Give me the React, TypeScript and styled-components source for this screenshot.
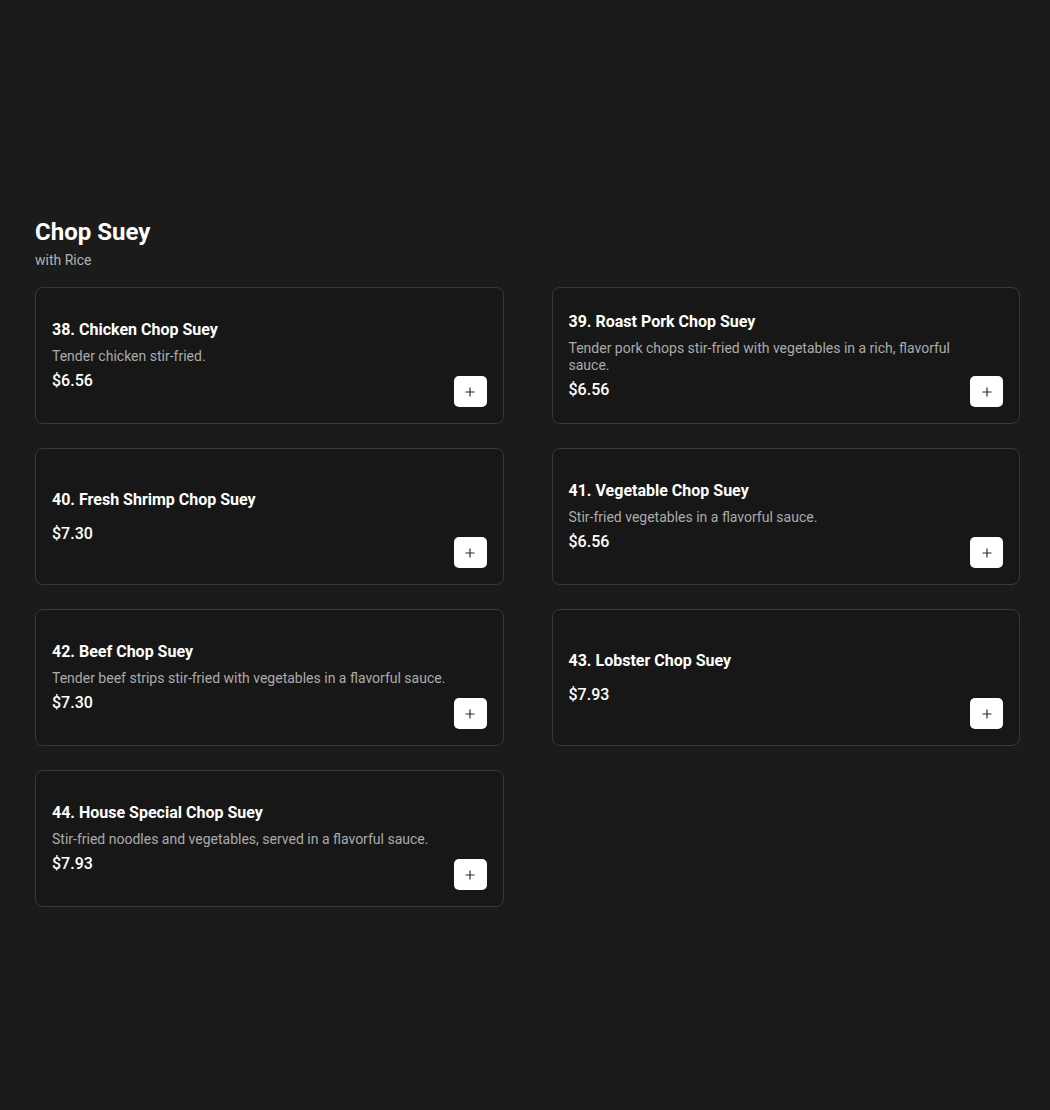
import styled, { createGlobalStyle } from "styled-components";
import { Plus } from "lucide-react";

interface MenuItem {
  id: number;
  name: string;
  description?: string;
  price: number;
}

const items: MenuItem[] = [
  { id: 38, name: "Chicken Chop Suey", description: "Tender chicken stir-fried.", price: 6.56 },
  {
    id: 39,
    name: "Roast Pork Chop Suey",
    description: "Tender pork chops stir-fried with vegetables in a rich, flavorful sauce.",
    price: 6.56,
  },
  { id: 40, name: "Fresh Shrimp Chop Suey", price: 7.3 },
  { id: 41, name: "Vegetable Chop Suey", description: "Stir-fried vegetables in a flavorful sauce.", price: 6.56 },
  {
    id: 42,
    name: "Beef Chop Suey",
    description: "Tender beef strips stir-fried with vegetables in a flavorful sauce.",
    price: 7.3,
  },
  { id: 43, name: "Lobster Chop Suey", price: 7.93 },
  {
    id: 44,
    name: "House Special Chop Suey",
    description: "Stir-fried noodles and vegetables, served in a flavorful sauce.",
    price: 7.93,
  },
];

const GlobalStyle = createGlobalStyle`
  html, body {
    margin: 0;
    padding: 0;
    background: #1b1b1b;
  }
  body {
    font-family: Roboto, "Noto Sans", Arial, sans-serif;
    color: #ffffff;
    min-height: 1110px;
  }
`;

const Section = styled.section`
  padding: 216px 30px 40px 35px;
`;

const Heading = styled.h2`
  margin: 0;
  font-size: 24px;
  font-weight: 700;
  line-height: 32px;
`;

const Subheading = styled.p`
  margin: 0 0 15px;
  font-size: 14px;
  line-height: 24px;
  color: #b3b3b3;
`;

const Grid = styled.div`
  display: grid;
  grid-template-columns: repeat(2, 1fr);
  column-gap: 48px;
  row-gap: 24px;
`;

const Card = styled.article`
  display: flex;
  align-items: center;
  justify-content: space-between;
  min-height: 137px;
  box-sizing: border-box;
  padding: 16px;
  background: #171717;
  border: 1px solid #383838;
  border-radius: 8px;
`;

const Info = styled.div`
  flex: 1;
  min-width: 0;
  display: flex;
  flex-direction: column;
`;

const Name = styled.h3`
  margin: 0 0 6px;
  font-size: 16px;
  font-weight: 700;
  line-height: 24px;
`;

const Description = styled.p`
  margin: 0 0 4px;
  font-size: 14px;
  line-height: 17px;
  color: #ababab;
`;

const Price = styled.div`
  font-size: 16px;
  font-weight: 500;
  line-height: 24px;
`;

const AddButton = styled.button`
  align-self: flex-end;
  flex: none;
  width: 33px;
  height: 31px;
  display: grid;
  place-items: center;
  padding: 0;
  background: #ffffff;
  color: #2a2a2a;
  border: none;
  border-radius: 5px;
  cursor: pointer;
`;

export default function App() {
  return (
    <>
      <GlobalStyle />
      <Section>
        <Heading>Chop Suey</Heading>
        <Subheading>with Rice</Subheading>
        <Grid>
          {items.map((item) => (
            <Card key={item.id}>
              <Info>
                <Name>
                  {item.id}. {item.name}
                </Name>
                <Description>{item.description}</Description>
                <Price>${item.price.toFixed(2)}</Price>
              </Info>
              <AddButton aria-label={`add ${item.name}`}>
                <Plus size={14} strokeWidth={2} />
              </AddButton>
            </Card>
          ))}
        </Grid>
      </Section>
    </>
  );
}
